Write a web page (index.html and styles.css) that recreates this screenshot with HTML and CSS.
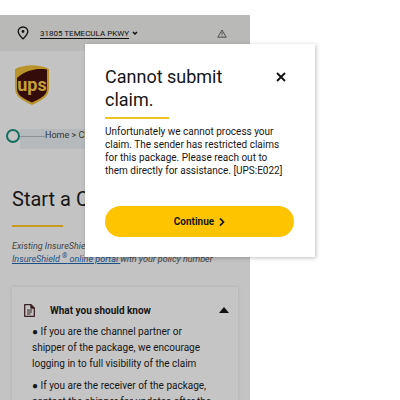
FILE: index.html
```html
<!DOCTYPE html>
<html lang="en">
<head>
  <meta charset="UTF-8" />
  <meta name="viewport" content="width=device-width, initial-scale=1.0"/>
  <title>Start a Claim</title>
  <link rel="stylesheet" href="styles.css">
</head>
<body>
  <div class="page">
    <!-- Location bar -->
    <div class="location-bar">
      <svg class="pin" viewBox="0 0 12 14" aria-hidden="true">
        <path d="M6 1C3.200 1 1.200 3 1.200 5.600C1.200 8.500 3.500 10.500 6 12.900C8.500 10.500 10.800 8.500 10.800 5.600C10.800 3 8.800 1 6 1Z" fill="none" stroke="#111" stroke-width="1.300"/>
        <circle cx="6" cy="5.500" r="1.400" fill="#111"/>
      </svg>
      <a href="#" class="address">31805 TEMECULA PKWY</a>
      <svg class="chevron" viewBox="0 0 6 4" aria-hidden="true">
        <path d="M1 1L3 3L5 1" fill="none" stroke="#111" stroke-width="1.500"/>
      </svg>
      <svg class="alert" viewBox="0 0 10 9" aria-hidden="true">
        <path d="M5 1L9.200 8.200H0.800Z" fill="none" stroke="#444" stroke-width="0.900" stroke-linejoin="round"/>
        <path d="M5 3.200V5.800M5 6.500V7.400" stroke="#444" stroke-width="0.900"/>
      </svg>
    </div>

    <header>
      <div class="logo">
        <svg viewBox="0 0 34 40" aria-hidden="true">
          <path d="M0 4C10 -1 24 -1 34 4V23C34 32 27 35 17 40C7 35 0 32 0 23Z" fill="#b9942a"/>
          <path d="M2 13C11 5 22 3 32 4.500V23C32 31 26 33 17 37.600C8 33 2 31 2 23Z" fill="#340c09"/>
        </svg>
        <span>ups</span>
      </div>
    </header>

    <nav class="breadcrumb">
      <span class="ring"></span>
      <div class="trail">
        <span class="line"></span>
        <a href="#">Home &gt; Claims</a>
      </div>
    </nav>

    <main>
      <h1>Start a Claim</h1>
      <p class="intro">Existing InsureShield customers?<br><a href="#">InsureShield <sup>®</sup> online portal </a>with your policy number</p>

      <section class="card">
        <div class="card-title">
          <svg class="doc" viewBox="0 0 11 13" aria-hidden="true">
            <path d="M0.700 0.700H7L10.300 4V12.300H0.700Z" fill="none" stroke="#3b2023" stroke-width="1.300" stroke-linejoin="round"/>
            <path d="M6.800 0.800V4.200H10.200" fill="#3b2023" stroke="#3b2023"/>
            <path d="M3 6H8M3 8H8M3 10H6.500" stroke="#3b2023"/>
          </svg>
          <h2>What you should know</h2>
          <svg class="caret" viewBox="0 0 10 6" aria-hidden="true"><path d="M0 6L5 0L10 6Z" fill="#111"/></svg>
        </div>
        <p>● If you are the channel partner or shipper of the package, we encourage logging in to full visibility of the claim</p>
        <p>● If you are the receiver of the package, contact the shipper for updates after the claim is filed</p>
      </section>
    </main>
  </div>

  <!-- Error dialog -->
  <div class="modal" role="dialog" aria-labelledby="modalTitle">
    <div class="modal-head">
      <h2 id="modalTitle">Cannot submit claim.</h2>
      <button class="close" aria-label="Close">
        <svg viewBox="0 0 10 10"><path d="M1 1L9 9M9 1L1 9" stroke="#111" stroke-width="1.900"/></svg>
      </button>
    </div>
    <p>Unfortunately we cannot process your claim. The sender has restricted claims for this package. Please reach out to them directly for assistance. [UPS:E022]</p>
    <button class="continue">Continue
      <svg viewBox="0 0 6 8" aria-hidden="true"><path d="M1 0.500L4.500 4L1 7.500" fill="none" stroke="#111" stroke-width="1.700"/></svg>
    </button>
  </div>
</body>
</html>
```

FILE: styles.css
```css
* {
  box-sizing: border-box;
}

body {
  font-family: Roboto, Arial, sans-serif;
  margin: 0;
  padding-top: 15px;
  height: 100vh;
  overflow: hidden;
  background: #fff;
  color: #161616;
}

h1, h2, p {
  margin: 0;
}

button {
  font-family: inherit;
  border: none;
  cursor: pointer;
}

.page {
  width: 62.5%;
  height: 100%;
  overflow: hidden;
  background: #c3c3c3;
}

/* Location bar */
.location-bar {
  display: flex;
  align-items: center;
  height: 36px;
  padding: 0 23px 0 17px;
  background: #b9b9b8;
}

.pin {
  width: 12px;
  height: 14px;
  margin-right: 11px;
}

.address {
  font-size: 8px;
  color: #111;
  text-underline-offset: 2px;
  white-space: nowrap;
}

.chevron {
  width: 6px;
  height: 4px;
  margin-left: 3px;
}

.alert {
  width: 10px;
  height: 9px;
  margin-left: auto;
}

header {
  padding: 14px 15px 24px;
}

.logo {
  display: grid;
  width: 34px;
  height: 40px;
}

.logo svg,
.logo span {
  grid-area: 1 / 1;
}

.logo span {
  align-self: center;
  justify-self: center;
  font-size: 18px;
  line-height: 20px;
  font-weight: 700;
  color: #c59f35;
}

/* Breadcrumb */
.breadcrumb {
  display: flex;
  align-items: flex-start;
  padding: 0 12px 0 6px;
}

.ring {
  width: 14px;
  height: 14px;
  border: 2px solid #176f60;
  border-radius: 50%;
}

.trail {
  display: flex;
  flex: 1;
  height: 20px;
  background: #b6b9bb;
}

.line {
  width: 25px;
  height: 8px;
  border-bottom: 1px solid #8d9394;
}

.trail a {
  font-size: 9px;
  line-height: 12px;
  color: #333;
  text-decoration: none;
}

main {
  padding: 0 12px;
}

h1 {
  margin-top: 38px;
  font-size: 20px;
  line-height: 24px;
  font-weight: 400;
}

h1::after {
  content: "";
  display: block;
  width: 51px;
  height: 2px;
  margin-top: 14px;
  background: #c69b22;
}

.intro {
  margin-top: 13px;
  font-size: 9px;
  line-height: 13px;
  font-style: italic;
  color: #444;
  white-space: nowrap;
}

.intro a {
  color: #1c4f85;
}

.intro sup {
  font-size: 7px;
  line-height: 1;
}

/* Accordion card */
.card {
  margin-top: 21px;
  padding: 15px 9px 15px 20px;
  background: #c5c5c5;
  box-shadow: 0 0 3px #aaa;
}

.card-title {
  display: flex;
  align-items: center;
  height: 16px;
  margin-left: -8px;
}

.card h2 {
  flex: 1;
  margin-left: 15px;
  font-size: 10px;
  font-weight: 700;
}

.doc {
  width: 11px;
  height: 13px;
}

.caret {
  width: 10px;
  height: 6px;
}

.card p {
  margin-top: 6px;
  padding-right: 15px;
  font-size: 10px;
  line-height: 16px;
}

/* Modal */
.modal {
  position: absolute;
  top: 44px;
  left: 85px;
  right: 85px;
  padding: 21px 21px 20px 20px;
  background: #fff;
  box-shadow: 1px 1px 4px rgba(0, 0, 0, 0.25);
}

.modal-head {
  display: flex;
  justify-content: space-between;
  align-items: flex-start;
}

.modal h2 {
  width: 130px;
  font-size: 18px;
  line-height: 23px;
  font-weight: 400;
}

.modal h2::after {
  content: "";
  display: block;
  width: 64px;
  height: 2px;
  margin-top: 6px;
  background: #edc22b;
}

.close {
  width: 10px;
  height: 10px;
  margin: 7px 8px 0 0;
  padding: 0;
  background: none;
}

.close svg {
  display: block;
}

.modal p {
  margin-top: 6px;
  padding-right: 6px;
  font-size: 10px;
  line-height: 13px;
}

.continue {
  display: flex;
  align-items: center;
  justify-content: center;
  gap: 5px;
  width: 100%;
  height: 31px;
  margin-top: 29px;
  border-radius: 16px;
  background: #ffc400;
  color: #161616;
  font-size: 10px;
  font-weight: 700;
}

.continue svg {
  width: 6px;
  height: 8px;
}
```
